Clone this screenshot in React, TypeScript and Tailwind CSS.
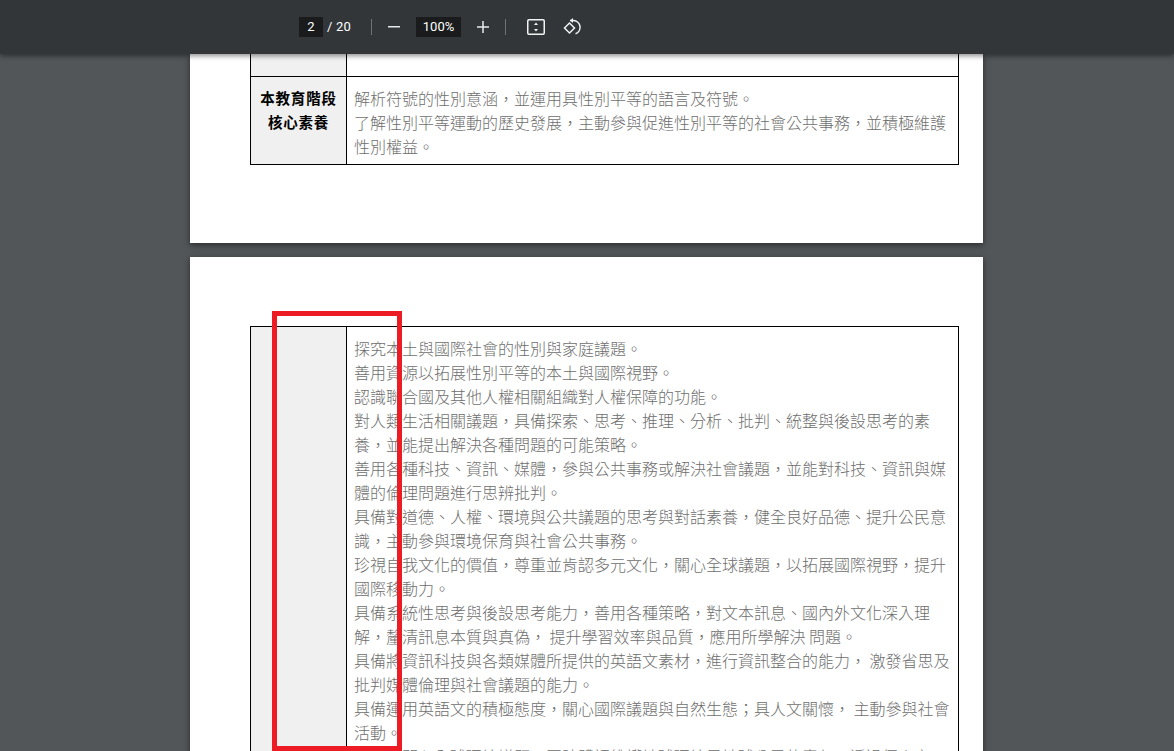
const page1 = [
  "解析符號的性別意涵，並運用具性別平等的語言及符號。",
  "了解性別平等運動的歷史發展，主動參與促進性別平等的社會公共事務，並積極維護",
  "性別權益。",
];
const page2 = [
  "探究本土與國際社會的性別與家庭議題。",
  "善用資源以拓展性別平等的本土與國際視野。",
  "認識聯合國及其他人權相關組織對人權保障的功能。",
  "對人類生活相關議題，具備探索、思考、推理、分析、批判、統整與後設思考的素",
  "養，並能提出解決各種問題的可能策略。",
  "善用各種科技、資訊、媒體，參與公共事務或解決社會議題，並能對科技、資訊與媒",
  "體的倫理問題進行思辨批判。",
  "具備對道德、人權、環境與公共議題的思考與對話素養，健全良好品德、提升公民意",
  "識，主動參與環境保育與社會公共事務。",
  "珍視自我文化的價值，尊重並肯認多元文化，關心全球議題，以拓展國際視野，提升",
  "國際移動力。",
  "具備系統性思考與後設思考能力，善用各種策略，對文本訊息、國內外文化深入理",
  "解，釐清訊息本質與真偽， 提升學習效率與品質，應用所學解決 問題。",
  "具備將資訊科技與各類媒體所提供的英語文素材，進行資訊整合的能力， 激發省思及",
  "批判媒體倫理與社會議題的能力。",
  "具備運用英語文的積極態度，關心國際議題與自然生態；具人文關懷， 主動參與社會",
  "活動。",
  "能主動關心全球環境議題，同時體認維護地球環境是地球公民的責任，透過個人實",
];

function Lines({ items }: { items: string[] }) {
  return (
    <div className="flex-1 pl-[7px] pt-[9px] pb-[6px] text-[16px] leading-[24px] text-[#6e6e6e] font-light">
      {items.map((t) => (
        <div key={t} className="whitespace-pre">{t}</div>
      ))}
    </div>
  );
}

export default function App() {
  return (
    <div
      className="relative h-[751px] w-[1174px] overflow-hidden bg-[#525659]"
      style={{ fontFamily: '"Noto Sans CJK TC", "Liberation Serif", serif' }}
    >
      <header
        className="relative z-10 flex h-[54px] items-center bg-[#323639] pl-[299px] text-white shadow-[0_2px_5px_rgba(0,0,0,0.45)]"
        style={{ fontFamily: 'Roboto, "Liberation Sans", sans-serif' }}
      >
        <span className="flex h-[20px] w-[24px] items-center justify-center bg-[#191b1c] text-[13px]">2</span>
        <span className="ml-[4px] text-[13px] tracking-[0.2px]">/ 20</span>
        <span className="ml-[20px] h-[16px] w-px bg-[#6f7275]" />
        <svg className="ml-[16px]" width="12" height="2" viewBox="0 0 12 2"><rect width="12" height="1.5" fill="#e8eaed" /></svg>
        <span className="ml-[16px] flex h-[20px] w-[45px] items-center justify-center bg-[#191b1c] text-[13px]">100%</span>
        <svg className="ml-[16px]" width="12" height="12" viewBox="0 0 12 12"><path d="M0 6h12M6 0v12" stroke="#e8eaed" strokeWidth="1.5" fill="none" /></svg>
        <span className="ml-[16px] h-[16px] w-px bg-[#6f7275]" />
        <svg className="ml-[21px]" width="18" height="16" viewBox="0 0 18 16" fill="none">
          <rect x=".75" y=".75" width="16.5" height="14.5" rx="1.2" stroke="#f1f3f4" strokeWidth="1.5" />
          <path d="M9 3.5 11 6H7ZM9 12.5 7 10h4Z" fill="#f1f3f4" />
        </svg>
        <svg className="ml-[18px]" width="18" height="18" viewBox="0 0 18 18" fill="none">
          <path d="M1.5 10 6.5 5l5 5-5 5Z" stroke="#f1f3f4" strokeWidth="1.5" />
          <path d="M7 2.5h3.5a6.8 6.8 0 0 1 2 13.2" stroke="#f1f3f4" strokeWidth="1.5" />
          <path d="M10 0 7 2.5 10 5Z" fill="#f1f3f4" />
        </svg>
      </header>

      <main className="flex flex-col items-center pr-[1px]">
        <section className="w-[793px] bg-white pl-[60px] pr-[24px] pb-[78px] shadow-[0_2px_6px_rgba(0,0,0,0.5)]">
          <div className="border-x border-b border-black">
            <div className="flex h-[23px] border-b border-black">
              <div className="w-[96px] border-r border-black bg-[#f0f0f0]" />
            </div>
            <div className="flex h-[87px]">
              <div
                className="flex w-[96px] flex-col items-center border-r border-black bg-[#f0f0f0] pt-[9px] text-[14.5px] leading-[24px] font-bold tracking-[0.8px] text-black"
              >
                <div>本教育階段</div>
                <div>核心素養</div>
              </div>
              <Lines items={page1} />
            </div>
          </div>
        </section>
        <section className="mt-[14px] h-[600px] w-[793px] bg-white pl-[60px] pr-[24px] pt-[69px] shadow-[0_2px_6px_rgba(0,0,0,0.5)]">
          <div className="flex border-x border-t border-black">
            <div className="w-[96px] shrink-0 border-r border-black bg-[#f0f0f0]" />
            <Lines items={page2} />
          </div>
        </section>
      </main>

      <div className="absolute left-[272px] top-[311px] z-20 h-[440px] w-[130px] border-[5px] border-[#ed1c24]" />
    </div>
  );
}
